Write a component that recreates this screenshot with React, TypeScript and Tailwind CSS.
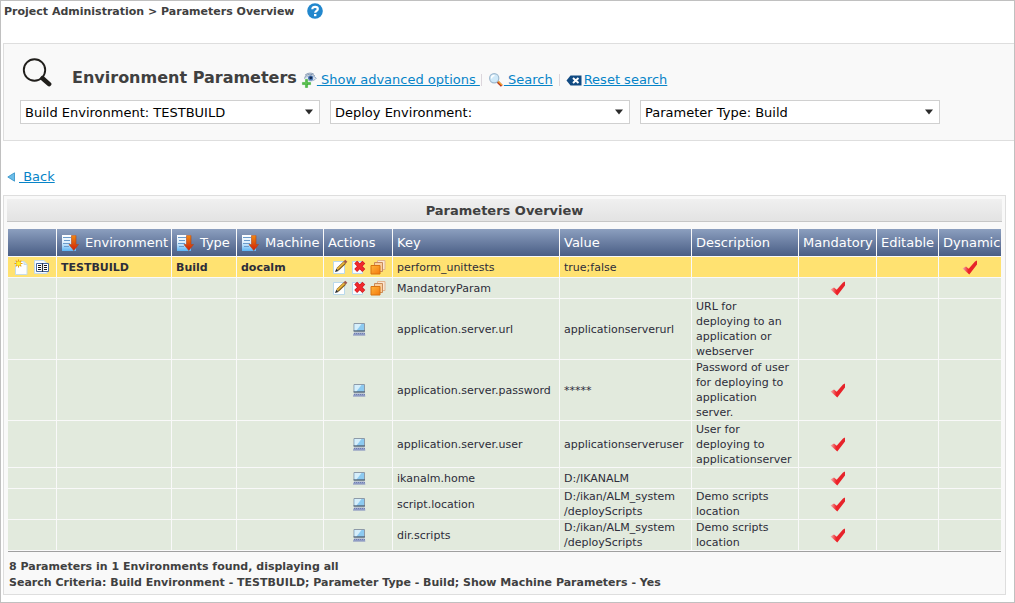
import type { ReactNode } from "react";

function HelpIcon() {
  return (
    <svg viewBox="0 0 16 16" className="block size-4" aria-hidden="true">
      <circle cx="8" cy="8" r="7.8" fill="#2287cd" />
      <path d="M5.300 6.300C5.300 4.600 6.500 3.800 8.100 3.800c1.600 0 2.700.8 2.700 2.100 0 1.900-2.600 1.900-2.600 3.900" fill="none" stroke="#fff" strokeWidth="2.200" />
      <rect x="7" y="11" width="2.400" height="2.200" fill="#fff" />
    </svg>
  );
}

function MagnifierIcon() {
  return (
    <svg viewBox="0 0 30 30" className="block size-[30px] shrink-0" aria-hidden="true">
      <circle cx="12.500" cy="12" r="10.700" fill="none" stroke="#211f1c" strokeWidth="1.900" />
      <path d="M19 18.700l2.200 2" stroke="#211f1c" strokeWidth="2.500" />
      <path d="M21 20.700l6.100 5.400" stroke="#211f1c" strokeWidth="4.600" strokeLinecap="round" />
    </svg>
  );
}

function AdvancedIcon() {
  return (
    <svg viewBox="0 0 16 16" className="block size-4" aria-hidden="true">
      <path d="M3.500 5.500C5.500 2 11 1.200 14 4.200M4 3.300C6.500.8 10.500.6 12.800 2.200" fill="none" stroke="#7d93b0" strokeWidth="1" />
      <path d="M3.500 6.500C6 3 12 2.800 15.300 6.200 13 9.500 7 10 3.500 6.500z" fill="#dfe9f4" stroke="#8ea6c2" strokeWidth=".8" />
      <circle cx="9.600" cy="6" r="2.600" fill="#4d79b5" />
      <circle cx="9.800" cy="5.800" r="1.400" fill="#12284f" />
      <path d="M4 7h3v3h3v3H7v3H4v-3H1v-3h3z" fill="#3fae3a" stroke="#dff2dc" strokeWidth=".5" />
      <path d="M5 8v7M2 11h7" stroke="#6dcc60" strokeWidth=".9" />
    </svg>
  );
}

function SearchIcon() {
  return (
    <svg viewBox="0 0 16 16" className="block size-4" aria-hidden="true">
      <path d="M9.500 9.500l4.300 4.400" stroke="#b8351b" strokeWidth="2.600" />
      <path d="M9.900 9.200l4 4" stroke="#ffb52e" strokeWidth="1.200" />
      <circle cx="6.200" cy="6.200" r="4.600" fill="#cfe9f9" stroke="#9fb9cf" strokeWidth="1.200" />
      <path d="M3.500 6.500a3 3 0 0 1 3-3" fill="none" stroke="#fff" strokeWidth="1.300" />
    </svg>
  );
}

function ResetIcon() {
  return (
    <svg viewBox="0 0 16 16" className="mr-0.5 block size-4" aria-hidden="true">
      <path d="M.5 8.500L4.500 3.500h11v10h-11z" fill="#114a82" />
      <path d="M7 6l5.500 5M12.500 6L7 11" stroke="#fff" strokeWidth="2" />
    </svg>
  );
}

function SortIcon() {
  return (
    <svg viewBox="0 0 18 18" className="block size-[18px] shrink-0" aria-hidden="true">
      <defs>
        <linearGradient id="sheet" x1="0" y1="0" x2="0" y2="1">
          <stop offset="0" stopColor="#fff" />
          <stop offset=".5" stopColor="#d9edfc" />
          <stop offset="1" stopColor="#5ab4f5" />
        </linearGradient>
        <linearGradient id="arrow" x1="0" y1="0" x2="0" y2="1">
          <stop offset="0" stopColor="#f08a10" />
          <stop offset="1" stopColor="#cf1d08" />
        </linearGradient>
      </defs>
      <path d="M1 1h14v16H1z" fill="url(#sheet)" />
      <path d="M2 3.500h8M3 6.500h6M2 9.500h7M3 12.500h5" stroke="#6a9bcb" strokeWidth="1" />
      <path d="M10.500 1.500h4.500v9h2.500l-4.700 6-4.800-6h2.500z" fill="url(#arrow)" stroke="#b0431a" strokeWidth=".6" />
    </svg>
  );
}

function NewIcon() {
  return (
    <svg viewBox="0 0 16 16" className="block size-4" aria-hidden="true">
      <path d="M1.500 2.500H10l3 3v10H1.500z" fill="#fdfeff" stroke="#c5dcea" />
      <path d="M10 2.500v3h3" fill="#dcecf7" stroke="#c5dcea" />
      <path d="M4.500.5v8M.5 4.500h8M1.700 1.700l5.600 5.600M7.300 1.700L1.700 7.300" stroke="#e79b12" strokeWidth="1.100" />
      <circle cx="4.500" cy="4.500" r="2.300" fill="#fff02a" stroke="#f2b90d" strokeWidth=".6" />
    </svg>
  );
}

function BookIcon() {
  return (
    <svg viewBox="0 0 16 16" className="block size-4" aria-hidden="true">
      <path d="M.5 1.500H10l3 3v10H.5z" fill="#f5faff" stroke="#c5dcea" />
      <path d="M2.500 4.500h12v8h-12z" fill="#fff" stroke="#4668a0" />
      <path d="M8.500 4v9" stroke="#2b3442" strokeWidth="1.200" />
      <path d="M4 6.500h3M4 8.500h3M4 10.500h3M10 6.500h3M10 8.500h3M10 10.500h3" stroke="#15181d" strokeWidth="1.100" />
    </svg>
  );
}

function EditIcon() {
  return (
    <svg viewBox="0 0 16 16" className="block size-4" aria-hidden="true">
      <path d="M1.500 2.500h11v12h-11z" fill="#fff" stroke="#b9d9ec" />
      <path d="M5.500 10.500L12.800 3.500" stroke="#7d5a1c" strokeWidth="3.200" />
      <path d="M5.300 10.200L12.500 3.300" stroke="#ecb63a" strokeWidth="1.800" />
      <path d="M12.700 3.400l1.600-1.600" stroke="#a0584a" strokeWidth="3" />
      <path d="M3 13l1.300-3.300 2.200 2.200z" fill="#26292c" />
    </svg>
  );
}

function DeleteIcon() {
  return (
    <svg viewBox="0 0 16 16" className="block size-4" aria-hidden="true">
      <path d="M1.500 2.500h10v12h-10z" fill="#f8fcff" stroke="#b9d9ec" />
      <path d="M4.700 3.200l8.100 8.300M12.800 3.200l-8.100 8.300" stroke="#c8181e" strokeWidth="4" />
      <path d="M5 3.500l7.500 7.700M12.500 3.500L5 11.200" stroke="#f2292d" strokeWidth="2.700" />
    </svg>
  );
}

function CopyIcon() {
  return (
    <svg viewBox="0 0 16 16" className="block size-4" aria-hidden="true">
      <defs>
        <linearGradient id="front" x1="0" y1="0" x2="1" y2="1">
          <stop offset="0" stopColor="#ffb53c" />
          <stop offset="1" stopColor="#f4790c" />
        </linearGradient>
      </defs>
      <path d="M7.500 1.500h7.500v9H7.500z" fill="#fae6d2" stroke="#e2b48f" />
      <path d="M4.500 3.500h8v9h-8z" fill="#f9cf9f" stroke="#c98a58" />
      <path d="M1 6.500h9v8.500H1z" fill="url(#front)" stroke="#d9730f" />
    </svg>
  );
}

function MachineIcon() {
  return (
    <svg viewBox="0 0 16 16" className="mx-auto block size-4" aria-hidden="true">
      <path d="M3 2.500h10.500v7.500H3z" fill="#8ccaf0" stroke="#8d9aa8" />
      <path d="M3.500 3h7l-5 6.500h-2z" fill="#d6effb" />
      <path d="M2.500 10h11.500" stroke="#3d5268" />
      <path d="M3 11.500h10.500l1 3H2z" fill="#9aa6cc" />
      <path d="M3 12.500h11M2.500 14h12" stroke="#6474a8" strokeWidth=".8" strokeDasharray="1 1" />
    </svg>
  );
}

function CheckIcon() {
  return (
    <svg viewBox="0 0 16 16" className="mx-auto block size-4" role="img" aria-label="Yes">
      <defs>
        <linearGradient id="tick" x1="0" y1="0" x2="1" y2="0">
          <stop offset="0" stopColor="#f3b5b2" />
          <stop offset=".4" stopColor="#ee2228" />
          <stop offset="1" stopColor="#e3242b" />
        </linearGradient>
      </defs>
      <path d="M.5 9.500L4 7.500l2.700 2.300L13 2.500l2-1v4L7.300 15.500z" fill="url(#tick)" />
    </svg>
  );
}

function ToolLink({ icon, children }: { icon: ReactNode; children: string }) {
  return (
    <a href="#" className="flex items-center text-[13px] leading-4 text-[#0784c8]">
      {icon}
      <span className="whitespace-pre underline">{children}</span>
    </a>
  );
}

function Filter({ label, value }: { label: string; value: string }) {
  return (
    <div className="relative w-[300px]">
      <select aria-label={label} className="block h-6 w-full appearance-none border border-[#d0d0d0] bg-white pt-0.5 pr-6 pl-1 text-[13px] leading-4 text-black">
        <option>{`${label}: ${value}`}</option>
      </select>
      <svg viewBox="0 0 8 6" className="pointer-events-none absolute top-[9px] right-[7px] h-1.5 w-2" aria-hidden="true">
        <path d="M0 .5h8L4 5.500z" fill="#2b2b2b" />
      </svg>
    </div>
  );
}

const columns = [
  { name: "", width: "w-[48px]", sort: false },
  { name: "Environment", width: "w-[114px]", sort: true },
  { name: "Type", width: "w-[64px]", sort: true },
  { name: "Machine", width: "w-[86px]", sort: true },
  { name: "Actions", width: "w-[68px]", sort: false },
  { name: "Key", width: "", sort: false },
  { name: "Value", width: "w-[131px]", sort: false },
  { name: "Description", width: "w-[106px]", sort: false },
  { name: "Mandatory", width: "w-[77px]", sort: false },
  { name: "Editable", width: "w-[61px]", sort: false },
  { name: "Dynamic", width: "w-[62px]", sort: false },
];

type Row = {
  key: string;
  value: string[];
  description: string[];
  mandatory?: boolean;
  dynamic?: boolean;
  own?: boolean;
};

const rows: Row[] = [
  { key: "perform_unittests", value: ["true;false"], description: [], dynamic: true, own: true },
  { key: "MandatoryParam", value: [], description: [], mandatory: true, own: true },
  { key: "application.server.url", value: ["applicationserverurl"], description: ["URL for", "deploying to an", "application or", "webserver"] },
  { key: "application.server.password", value: ["*****"], description: ["Password of user", "for deploying to", "application", "server."], mandatory: true },
  { key: "application.server.user", value: ["applicationserveruser"], description: ["User for", "deploying to", "applicationserver"], mandatory: true },
  { key: "ikanalm.home", value: ["D:/IKANALM"], description: [], mandatory: true },
  { key: "script.location", value: ["D:/ikan/ALM_system", "/deployScripts"], description: ["Demo scripts", "location"], mandatory: true },
  { key: "dir.scripts", value: ["D:/ikan/ALM_system", "/deployScripts"], description: ["Demo scripts", "location"], mandatory: true },
];

function rowHeight(row: Row) {
  return row.description.length === 3 ? "h-[46px]" : "h-5";
}

function Lines({ text }: { text: string[] }) {
  return <>{text.map((line) => <span key={line} className="block">{line}</span>)}</>;
}

function IconButton({ label, children }: { label: string; children: ReactNode }) {
  return <button type="button" aria-label={label} className="block">{children}</button>;
}

function ParameterRow({ row, first }: { row: Row; first: boolean }) {
  return (
    <tr className={`${rowHeight(row)} ${first ? "bg-[#ffe271]" : "bg-[#e2eadd]"}`}>
      <td>
        {first && (
          <div className="flex justify-center gap-1">
            <IconButton label="Create parameter"><NewIcon /></IconButton>
            <IconButton label="View parameters"><BookIcon /></IconButton>
          </div>
        )}
      </td>
      <td className="px-1 font-bold">{first && "TESTBUILD"}</td>
      <td className="px-1 font-bold">{first && "Build"}</td>
      <td className="px-1 font-bold">{first && "docalm"}</td>
      <td className="pl-0.5">
        {row.own ? (
          <div className="flex justify-center gap-[3px]">
            <IconButton label="Edit"><EditIcon /></IconButton>
            <IconButton label="Delete"><DeleteIcon /></IconButton>
            <IconButton label="Copy"><CopyIcon /></IconButton>
          </div>
        ) : (
          <MachineIcon />
        )}
      </td>
      <td className="px-1 whitespace-nowrap">{row.key}</td>
      <td className="px-1 whitespace-nowrap"><Lines text={row.value} /></td>
      <td className="px-1 whitespace-nowrap"><Lines text={row.description} /></td>
      <td>{row.mandatory && <CheckIcon />}</td>
      <td />
      <td>{row.dynamic && <CheckIcon />}</td>
    </tr>
  );
}

export default function App() {
  return (
    <div className="min-h-screen border border-[#c0c0c0] bg-white pb-[7px] pl-0.5 font-['Verdana','DejaVu_Sans',sans-serif] text-[11px] leading-[15px] text-[#2d2d3a]">
      <header className="flex h-[42px] items-start gap-3 pt-0.5 pl-px font-bold text-[#404040]">
        <h1 className="pt-px">Project Administration &gt; Parameters Overview</h1>
        <button type="button" aria-label="Help"><HelpIcon /></button>
      </header>

      <section className="border border-r-0 border-[#dedede] bg-[#f9f9f9] px-4 pt-3.5 pb-4">
        <div className="flex h-[42px] items-start pl-0.5">
          <MagnifierIcon />
          <h2 className="ml-5 pt-2 text-[16px] leading-6 font-bold text-[#404040]">Environment Parameters</h2>
          <div className="ml-1 flex items-center pt-3.5">
            <ToolLink icon={<AdvancedIcon />}>{" Show advanced options "}</ToolLink>
            <span className="mr-1.5 ml-px h-3 w-px bg-[#dcd6dc]" />
            <ToolLink icon={<SearchIcon />}>{" Search"}</ToolLink>
            <span className="mx-1.5 h-3 w-px bg-[#dcd6dc]" />
            <ToolLink icon={<ResetIcon />}>Reset search</ToolLink>
          </div>
        </div>
        <div className="flex gap-2.5">
          <Filter label="Build Environment" value="TESTBUILD" />
          <Filter label="Deploy Environment" value="" />
          <Filter label="Parameter Type" value="Build" />
        </div>
      </section>

      <nav className="flex h-[54px] items-center pt-[18px] pl-1">
        <a href="#" className="flex items-center gap-1 text-[13px] leading-4 text-[#0784c8]">
          <svg viewBox="0 0 8 10" className="h-2.5 w-2" aria-hidden="true">
            <path d="M7.500.8v8.400L.8 5z" fill="#6dbde8" stroke="#2e8fc6" strokeWidth=".8" />
          </svg>
          <span className="whitespace-pre underline">{" Back"}</span>
        </a>
      </nav>

      <main className="mr-2 border border-[#dedede] bg-[#f9f9f9] p-[3px]">
        <h2 className="h-[23px] border-b border-[#c6c6c6] bg-linear-to-b from-[#f0f0f0] to-[#e3e3e3] text-center text-[13px] leading-6 font-bold text-[#404040]">
          Parameters Overview
        </h2>
        <table className="mt-1.5 w-full table-fixed border-separate border-spacing-px">
          <thead>
            <tr className="h-[27px] text-[13px] leading-4 text-white">
              {columns.map((column) => (
                <th key={column.name} className={`${column.width} bg-linear-to-b from-[#8c9fbf] to-[#4a5e85] px-1 text-left font-normal whitespace-nowrap`}>
                  {column.sort ? (
                    <button type="button" className="flex items-center gap-1.5">
                      <SortIcon />
                      {column.name}
                    </button>
                  ) : (
                    column.name
                  )}
                </th>
              ))}
            </tr>
          </thead>
          <tbody>
            {rows.map((row, index) => <ParameterRow key={row.key} row={row} first={index === 0} />)}
          </tbody>
        </table>
        <div className="mx-px border-t border-[#a0a0a0] px-px pt-[7px] leading-4 font-bold text-[#404040]">
          <p>8 Parameters in 1 Environments found, displaying all</p>
          <p>Search Criteria: Build Environment - TESTBUILD; Parameter Type - Build; Show Machine Parameters - Yes</p>
        </div>
      </main>
    </div>
  );
}
